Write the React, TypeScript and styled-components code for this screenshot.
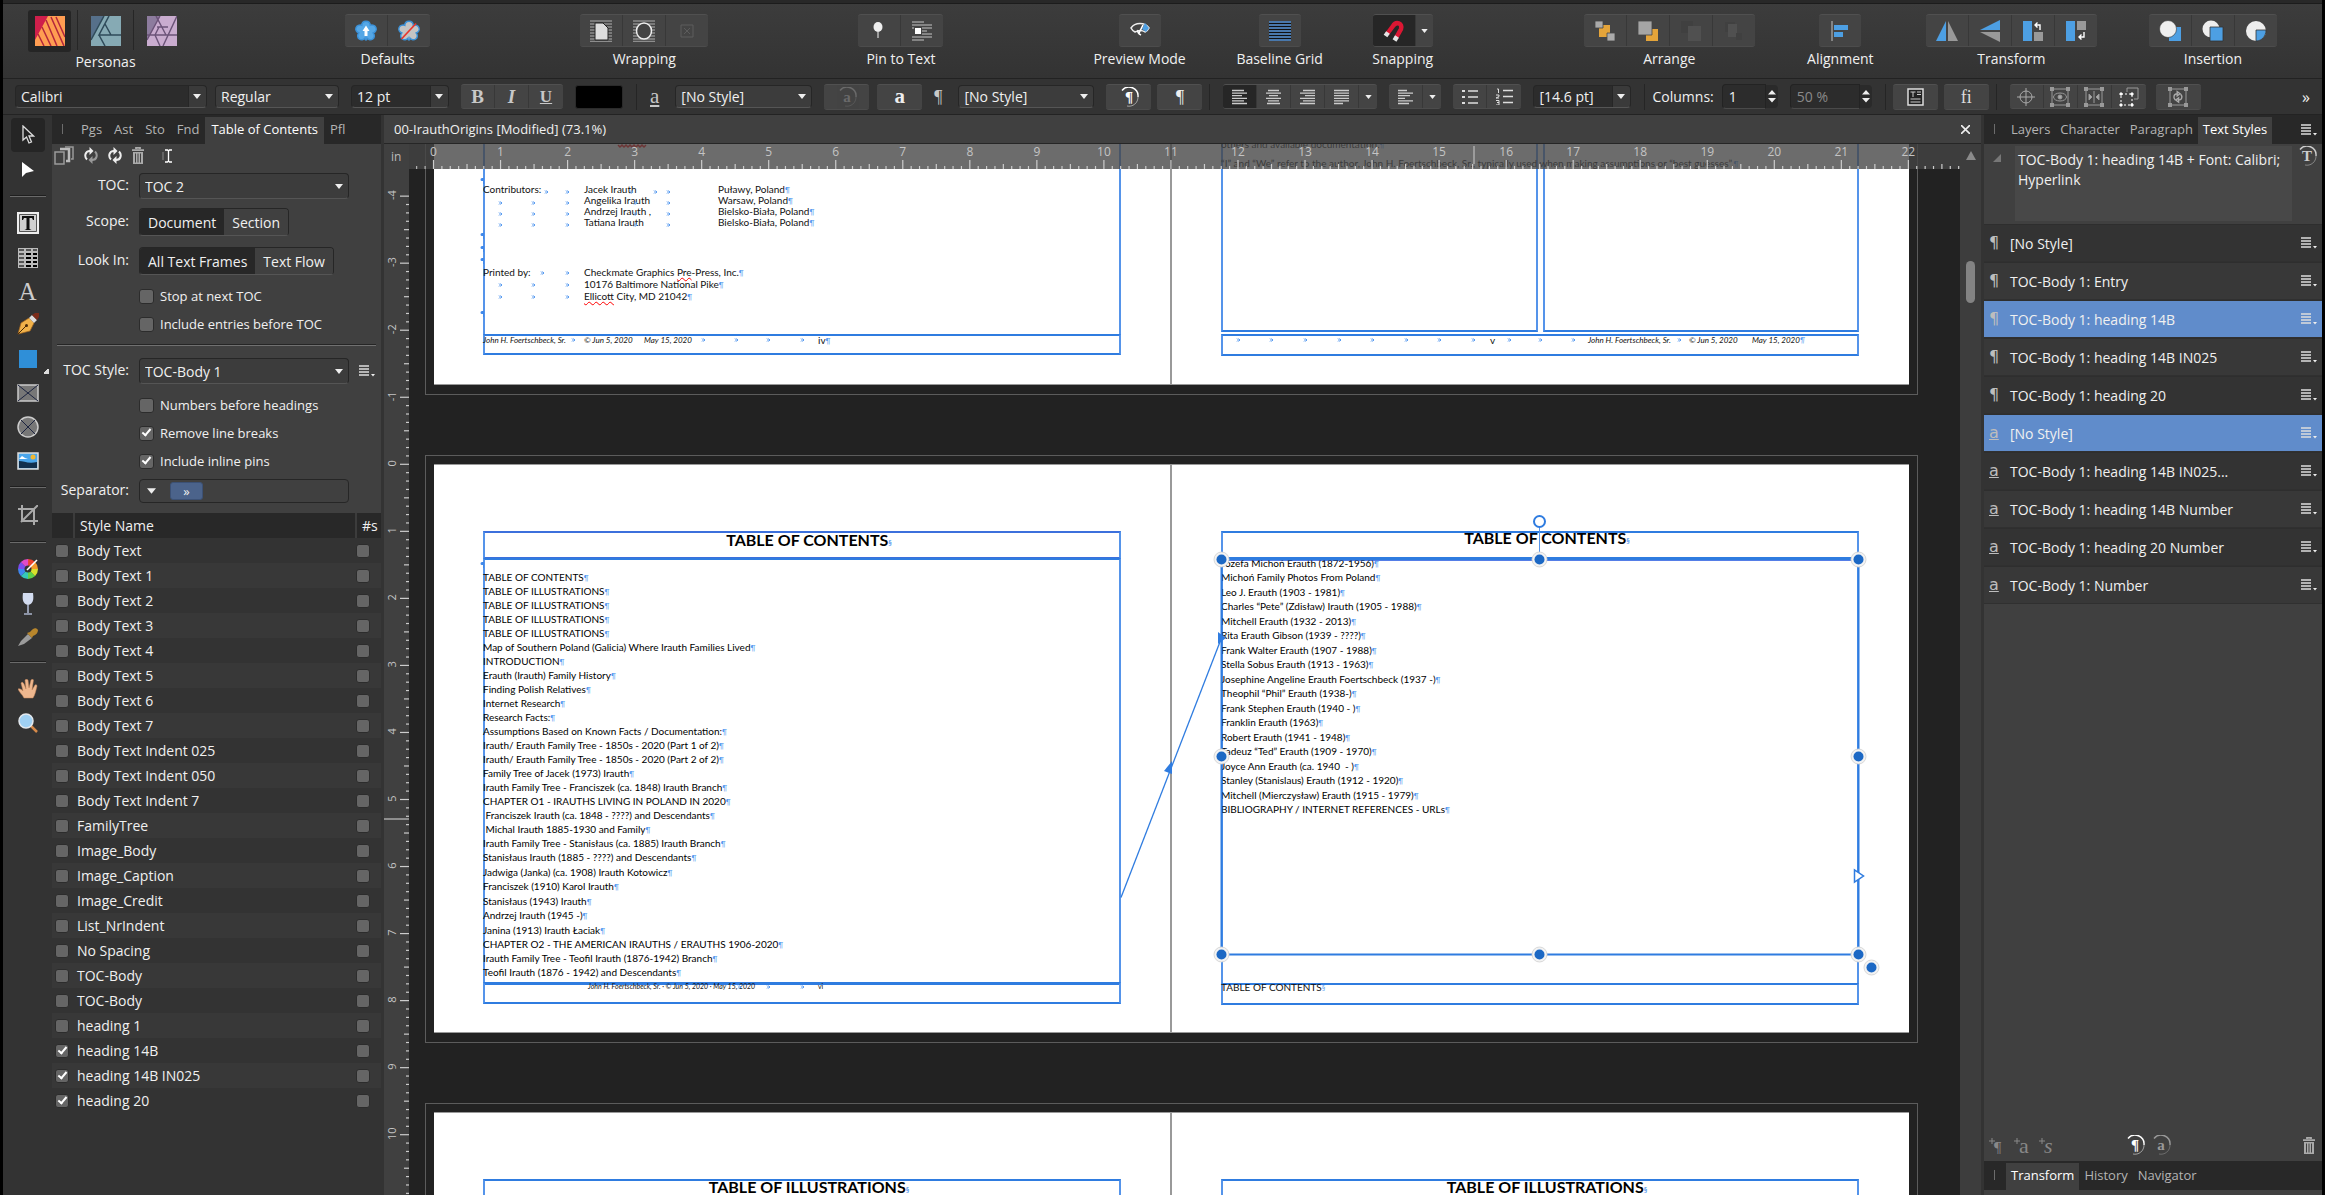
import React from "react";
import styled, { createGlobalStyle, css } from "styled-components";

const UI = `"Open Sans", "Noto Sans", sans-serif`;
const DOC = `Lato, "Open Sans", sans-serif`;
const SERIF = `"Liberation Serif", "DejaVu Serif", serif`;
const BLUE = "#2f7ce0";

const Global = createGlobalStyle`
  *, *::before, *::after { box-sizing: border-box; }
  body { margin: 0; background: #000; font-family: ${UI}; font-size: 14px; color: #f0f0f0; overflow: hidden; }
  button, select, input { font-family: inherit; color: inherit; margin: 0; }
  svg { display: block; flex: none; }
`;

/* ---------- shell ---------- */

const Shell = styled.div`
  display: flex;
  flex-direction: column;
  height: 100vh;
  padding: 0 3px;
  background: #000;
`;
const TitleStrip = styled.div`
  height: 4px;
  flex: none;
  background: #282828;
  border-bottom: 1px solid #1c1c1c;
`;
const Toolbar = styled.header`
  display: flex;
  height: 75px;
  flex: none;
  padding: 6px 0 0 25px;
  background: linear-gradient(#3c3c3c, #333);
  border-bottom: 1px solid #222;
`;
const Spacer = styled.div<{ $grow: number }>`
  flex: ${(p) => p.$grow} 1 0;
`;
const Group = styled.section<{ $w: number; $persona?: boolean }>`
  display: flex;
  flex-direction: column;
  align-items: center;
  flex: none;
  width: ${(p) => p.$w}px;
  padding-top: ${(p) => (p.$persona ? 0 : 4)}px;
  gap: ${(p) => (p.$persona ? 0 : 2)}px;
`;
const GroupLabel = styled.span`
  font-size: 14px;
  line-height: 20px;
  white-space: nowrap;
`;
const Segments = styled.div<{ $h: number }>`
  display: flex;
  height: ${(p) => p.$h}px;
  border-radius: 3px;
  overflow: hidden;
  background: #444;
  border-top: 1px solid #505050;
  border-bottom: 1px solid #4c4c4c;
`;
const Seg = styled.button<{ $w: number; $on?: boolean; $dim?: boolean }>`
  display: flex;
  align-items: center;
  justify-content: center;
  width: ${(p) => p.$w}px;
  padding: 0;
  border: 0;
  border-right: 1px solid #383838;
  background: ${(p) => (p.$on ? "#262626" : "transparent")};
  color: #d0d0d0;
  opacity: ${(p) => (p.$dim ? 0.45 : 1)};
  &:last-child { border-right: 0; }
`;
const Personas = styled.div`
  display: flex;
  gap: 6px;
  height: 42px;
`;
const Persona = styled.button<{ $on?: boolean }>`
  display: flex;
  align-items: center;
  justify-content: center;
  width: 43px;
  padding: 0;
  border: 0;
  border-radius: 3px;
  background: ${(p) => (p.$on ? "#252525" : "transparent")};
`;
const PersonaRule = styled.span`
  width: 1px;
  height: 40px;
  background: #262626;
`;

/* ---------- context bar ---------- */

const Context = styled.div`
  display: flex;
  align-items: center;
  gap: 12px;
  height: 36px;
  flex: none;
  padding: 0 12px;
  background: #333;
  border-bottom: 1px solid #232323;
`;
const Cluster = styled.div<{ $gap?: number }>`
  display: flex;
  align-items: center;
  gap: ${(p) => p.$gap ?? 8}px;
`;
const Bar = styled.span`
  width: 1px;
  height: 26px;
  margin: 0 1px;
  background: #252525;
`;
const Glyph = styled.span<{ $size: number; $color?: string; $u?: boolean; $i?: boolean; $b?: boolean }>`
  font-family: ${SERIF};
  font-size: ${(p) => p.$size}px;
  line-height: 1;
  color: ${(p) => p.$color ?? "#c8c8c8"};
  text-decoration: ${(p) => (p.$u ? "underline" : "none")};
  font-style: ${(p) => (p.$i ? "italic" : "normal")};
  font-weight: ${(p) => (p.$b ? 700 : 400)};
`;
const SelectWrap = styled.span<{ $w: number; $h: number; $split?: boolean }>`
  position: relative;
  display: inline-flex;
  width: ${(p) => p.$w}px;
  height: ${(p) => p.$h}px;
  border: 1px solid #262626;
  border-bottom-color: #555;
  border-radius: 4px;
  background: ${(p) => (p.$split ? "linear-gradient(to right, #2c2c2c calc(100% - 18px), #262626 calc(100% - 18px), #262626 calc(100% - 17px), #3a3a3a 0)" : "#3c3c3c")};
  select {
    width: 100%;
    padding: 0 20px 0 5px;
    border: 0;
    appearance: none;
    background: transparent;
    font-size: 14px;
  }
  option { color: #222; }
`;
const CaretBox = styled.span`
  position: absolute;
  right: 5px;
  top: 0;
  bottom: 0;
  display: flex;
  align-items: center;
  pointer-events: none;
`;
const Swatch = styled.button`
  width: 48px;
  height: 24px;
  padding: 0;
  border: 1px solid #2a2a2a;
  border-radius: 3px;
  background: #000;
`;
const SpinWrap = styled.label<{ $dim?: boolean }>`
  display: flex;
  align-items: center;
  gap: 8px;
  font-size: 14px;
  white-space: nowrap;
  color: ${(p) => (p.$dim ? "#8a8a8a" : "#f0f0f0")};
`;
const SpinField = styled.input<{ $w: number }>`
  width: ${(p) => p.$w}px;
  height: 25px;
  padding: 0 6px;
  border: 1px solid #232323;
  border-bottom-color: #4a4a4a;
  border-radius: 4px 0 0 4px;
  background: #2c2c2c;
  font-size: 14px;
`;
const SpinKnob = styled.span`
  display: flex;
  align-items: center;
  justify-content: center;
  width: 12px;
  height: 23px;
  background: #2a2a2a;
  border-radius: 0 4px 4px 0;
`;
const Push = styled.button`
  margin-left: auto;
  padding: 0;
  border: 0;
  background: transparent;
  font-size: 16px;
`;

/* ---------- main columns ---------- */

const Main = styled.main`
  display: flex;
  flex: 1;
  min-height: 0;
  background: #333;
`;
const ToolStrip = styled.nav`
  display: flex;
  flex-direction: column;
  align-items: center;
  width: 49px;
  flex: none;
  padding-top: 3px;
  background: #333;
`;
const Tool = styled.button<{ $h: number; $on?: boolean }>`
  position: relative;
  display: flex;
  align-items: center;
  justify-content: center;
  width: 34px;
  height: ${(p) => p.$h}px;
  flex: none;
  padding: 0;
  border: 0;
  border-radius: 4px;
  background: ${(p) => (p.$on ? "#252525" : "transparent")};
`;
const Flyout = styled.span`
  position: absolute;
  right: -4px;
  bottom: 3px;
  width: 6px;
  height: 6px;
  background: linear-gradient(135deg, transparent 50%, #ddd 50%);
`;
const ToolRule = styled.hr`
  width: 36px;
  height: 2px;
  flex: none;
  margin: 8px 0;
  border: 0;
  background: #1f1f1f;
  border-bottom: 1px solid #6a6a6a;
`;
const Panel = styled.aside<{ $w: number }>`
  display: flex;
  flex-direction: column;
  width: ${(p) => p.$w}px;
  flex: none;
  background: #404040;
`;
const Tabs = styled.div`
  display: flex;
  align-items: flex-end;
  height: 29px;
  flex: none;
  padding-left: 10px;
  background: #282828;
`;
const Grip = styled.span<{ $gap: number }>`
  width: 1px;
  height: 10px;
  margin: 0 ${(p) => p.$gap}px 10px 0;
  background: #6c6c6c;
`;
const Tab = styled.button<{ $on?: boolean; $tight?: boolean }>`
  height: 27px;
  padding: 0 ${(p) => (p.$tight ? 5 : 6)}px 4px;
  border: 0;
  background: ${(p) => (p.$on ? "#404040" : "transparent")};
  color: ${(p) => (p.$on ? "#fff" : "#b4b4b4")};
  font-size: 13px;
  white-space: nowrap;
`;
const TabEnd = styled.span`
  margin: 0 5px 8px auto;
`;
const Gutter = styled.div`
  width: 3px;
  flex: none;
  background: #333;
`;
const PanelIcons = styled.div`
  display: flex;
  align-items: center;
  gap: 10px;
  height: 23px;
  flex: none;
  padding-left: 2px;
`;
const IconButton = styled.button`
  display: flex;
  padding: 0;
  border: 0;
  background: transparent;
`;
const Form = styled.div`
  display: flex;
  flex-direction: column;
  padding: 6px 5px 10px 0;
`;
const Field = styled.div<{ $mt?: number }>`
  display: grid;
  grid-template-columns: 77px 210px auto;
  column-gap: 10px;
  align-items: center;
  margin-top: ${(p) => p.$mt ?? 0}px;
`;
const FieldLabel = styled.label`
  text-align: right;
  font-size: 14px;
  line-height: 20px;
  padding-bottom: 2px;
  white-space: nowrap;
`;
const Toggle = styled.div`
  display: inline-flex;
  justify-self: start;
  height: 28px;
  border: 1px solid #262626;
  border-bottom-color: #555;
  border-radius: 4px;
  overflow: hidden;
`;
const ToggleButton = styled.button<{ $on?: boolean }>`
  padding: 0 8px;
  border: 0;
  background: ${(p) => (p.$on ? "#272727" : "#404040")};
  font-size: 14px;
  white-space: nowrap;
`;
const Checks = styled.div<{ $mt: number }>`
  margin: ${(p) => p.$mt}px 0 0 87px;
`;
const CheckLine = styled.label`
  display: flex;
  align-items: center;
  gap: 6px;
  height: 28px;
  font-size: 13px;
`;
const Check = styled.input<{ $s: number }>`
  position: relative;
  display: block;
  width: ${(p) => p.$s}px;
  height: ${(p) => p.$s}px;
  flex: none;
  appearance: none;
  border: 1px solid #2c2c2c;
  border-radius: 3px;
  background: #656565;
  &:checked::after {
    content: "";
    position: absolute;
    left: 4px;
    top: 0;
    width: 5px;
    height: 9px;
    border: solid #fff;
    border-width: 0 2px 2px 0;
    transform: rotate(40deg);
  }
`;
const Rule = styled.hr`
  width: 319px;
  height: 2px;
  margin: 6px 0 12px 5px;
  border: 0;
  background: #252525;
  border-bottom: 1px solid #707070;
`;
const SeparatorBox = styled.div`
  display: flex;
  align-items: center;
  gap: 14px;
  height: 24px;
  padding-left: 7px;
  border: 1px solid #262626;
  border-radius: 4px;
`;
const Chip = styled.button`
  width: 33px;
  height: 18px;
  padding: 0;
  border: 1px solid #3c5175;
  border-radius: 3px;
  background: #4b638b;
  font-size: 13px;
  line-height: 14px;
`;
const StyleTable = styled.table`
  width: 100%;
  border-collapse: collapse;
  background: #333;
  th {
    height: 25px;
    padding: 0 0 0 5px;
    background: #282828;
    text-align: left;
    font-weight: 400;
    font-size: 14px;
    border-left: 2px solid #3c3c3c;
  }
  th:first-child { border-left: 0; width: 22px; }
  th:last-child { width: 25px; }
  td { height: 25px; padding: 0 0 0 3px; font-size: 14px; white-space: nowrap; line-height: 20px; }
  td:last-child { padding-left: 0; }
  tbody tr:nth-child(even) { background: #383838; }
`;
const TableFill = styled.div`
  flex: 1;
  background: #333;
`;

/* ---------- document ---------- */

const Doc = styled.section`
  display: flex;
  flex-direction: column;
  flex: 1;
  min-width: 0;
`;
const DocTab = styled.div`
  display: flex;
  align-items: center;
  justify-content: space-between;
  height: 29px;
  flex: none;
  padding: 0 11px 0 10px;
  background: #404040;
  border-bottom: 1px solid #262626;
  font-size: 13px;
`;
const DocBody = styled.div`
  display: flex;
  flex: 1;
  min-height: 0;
`;
const Canvas = styled.div`
  position: relative;
  flex: 1;
  min-width: 0;
  overflow: hidden;
  padding-left: 41px;
  background: #222;
`;
const RulerX = styled.div`
  position: absolute;
  left: 25px;
  right: 0;
  top: 0;
  height: 25px;
  overflow: hidden;
  background: rgba(68, 68, 68, 0.79);
`;
const RulerY = styled.div`
  position: absolute;
  left: 0;
  top: 0;
  bottom: 0;
  width: 25px;
  overflow: hidden;
  background: #404040;
`;
const Scroll = styled.div`
  display: flex;
  flex-direction: column;
  align-items: center;
  width: 21px;
  flex: none;
  padding-top: 7px;
  background: #3d3d3d;
`;
const Thumb = styled.div`
  width: 9px;
  height: 42px;
  margin-top: 101px;
  border-radius: 5px;
  background: #838383;
`;
const Spreads = styled.div`
  display: flex;
  flex-direction: column;
  gap: 60px;
  margin-top: -337px;
`;
const Spread = styled.article`
  position: relative;
  display: flex;
  width: 1493px;
  height: 588px;
  flex: none;
  padding: 8px;
  border: 1px solid #5c5c5c;
`;
const Sheet = styled.div`
  position: relative;
  width: 736px;
  height: 569px;
  background: #fff;
  color: #111;
  font-family: ${DOC};
  border-bottom: 1px solid #999;
  border-top: 1px solid #999;
  & + & { width: 739px; border-left: 2px solid #999; }
`;
const Frame = styled.div<{ $y: number; $h: number; $x?: number; $w?: number; $c?: string }>`
  position: absolute;
  left: ${(p) => p.$x ?? 49}px;
  top: ${(p) => p.$y}px;
  width: ${(p) => p.$w ?? 638}px;
  height: ${(p) => p.$h}px;
  border: 2px solid ${(p) => p.$c ?? BLUE};
  border-left-color: #5594ea;
  border-right-color: #5594ea;
`;
const text = css<{ $y: number; $x?: number }>`
  position: absolute;
  top: ${(p) => p.$y}px;
  left: ${(p) => p.$x ?? 49}px;
  margin: 0;
  white-space: nowrap;
`;
const Heading = styled.h2<{ $y: number }>`
  ${text}
  width: 652px;
  text-align: center;
  font-size: 16px;
  line-height: 20px;
  font-weight: 700;
  color: #000;
`;
const List = styled.ol<{ $y: number; $alt?: boolean }>`
  ${text}
  padding: 0;
  list-style: none;
  font-size: 10px;
  line-height: 14px;
  color: #000;
  li { white-space: pre; }
  ${(p) => p.$alt && css`li:nth-child(even) { padding-bottom: 1px; }`}
  ${(p) => !p.$alt && css`li:nth-child(21), li:nth-child(23), li:nth-child(25) { padding-bottom: 1px; }`}
`;
const Columns = styled.div<{ $y: number; $lh: number }>`
  ${text}
  display: grid;
  grid-template-columns: 101px 134px 200px;
  font-size: 10px;
  line-height: ${(p) => p.$lh}px;
`;
const Footer = styled.p<{ $y: number; $size?: number; $plain?: boolean }>`
  ${text}
  font-size: ${(p) => p.$size ?? 8}px;
  line-height: 12px;
  font-style: ${(p) => (p.$plain ? "normal" : "italic")};
`;
const Mark = styled.span`
  font-size: 7px;
  color: #5a9cf0;
  line-height: 1;
`;
const Squiggle = styled.span`
  text-decoration: underline wavy #f00 1px;
  text-underline-offset: 1px;
`;
const Overlay = styled.svg<{ $inset?: number }>`
  position: absolute;
  left: ${(p) => p.$inset ?? 0}px;
  top: ${(p) => p.$inset ?? 0}px;
  overflow: visible;
`;

/* ---------- right panel ---------- */

const Summary = styled.div`
  display: flex;
  align-items: flex-start;
  height: 80px;
  flex: none;
  padding: 2px 5px 0 9px;
`;
const SummaryText = styled.p`
  width: 277px;
  height: 75px;
  margin: 0 5px 0 14px;
  padding: 4px 0 0 3px;
  background: #484848;
  font-size: 14px;
  line-height: 20px;
  white-space: nowrap;
`;
const StyleList = styled.ul`
  margin: 0;
  padding: 0;
  list-style: none;
`;
const StyleRow = styled.li<{ $on?: boolean }>`
  display: flex;
  align-items: center;
  height: 38px;
  padding: 0 5px 0 0;
  background: #333;
  border-top: 1px solid #2e2e2e;
  border-bottom: 1px solid #303030;
  font-size: 14px;
  &:nth-child(even) { background: #383838; }
  && { ${(p) => p.$on && "background: #608ccb;"} }
  > span:nth-child(2) { flex: 1; }
`;
const RowGlyph = styled.span`
  width: 26px;
  padding-left: 5px;
  color: #bdbdbd;
  font-family: "DejaVu Sans", sans-serif;
  font-size: 16px;
  line-height: 20px;
`;
const StyleActions = styled.div`
  display: flex;
  align-items: center;
  height: 32px;
  margin-top: auto;
  padding: 0 7px 0 5px;
`;
const ActionSet = styled.div<{ $ml: number; $gap: number }>`
  display: flex;
  gap: ${(p) => p.$gap}px;
  margin-left: ${(p) => p.$ml}px;
`;
const PanelTail = styled.div`
  height: 5px;
  flex: none;
`;

/* ---------- small drawings ---------- */

const Caret = ({ w = 8, c = "#eee" }: { w?: number; c?: string }) => (
  <svg width={w} height={w - 3} viewBox="0 0 8 5"><path d="M0 0h8L4 5z" fill={c} /></svg>
);
const MenuIcon = () => (
  <svg width="16" height="12" viewBox="0 0 16 12">
    <path d="M0 1h10M0 4h10M0 7h10M0 10h10" stroke="#ddd" strokeWidth="1.6" />
    <path d="M12 9h4l-2 2.5z" fill="#eee" />
  </svg>
);
const Select = ({ w, h = 23, value, split, label, id }: { w: number; h?: number; value: string; split?: boolean; label?: string; id?: string }) => (
  <SelectWrap $w={w} $h={h} $split={split}>
    <select aria-label={label} id={id} defaultValue={value}><option>{value}</option></select>
    <CaretBox><Caret /></CaretBox>
  </SelectWrap>
);
const Lines = ({ xs }: { xs: [number, number][] }) => (
  <svg width="17" height="16" viewBox="0 0 17 16">
    {xs.map(([a, b], i) => <path key={i} d={`M${a} ${1.5 + i * 2.6}H${b}`} stroke="#ccc" strokeWidth="1.3" />)}
  </svg>
);
const Trash = () => (
  <svg width="12" height="17" viewBox="0 0 12 17">
    <path d="M4 2V.8h4V2M0 3.2h12" stroke="#aaa" strokeWidth="1.8" fill="none" />
    <path d="M1 5h10v12H1z" fill="#aaa" />
    <path d="M3.5 6.5v9M6 6.5v9M8.5 6.5v9" stroke="#404040" strokeWidth="1" />
  </svg>
);
const Refresh = ({ c = "#eee", d = "#999" }: { c?: string; d?: string }) => (
  <svg width="14" height="17" viewBox="0 0 14 17" fill="none">
    <path d="M3 12.500C0 9.500 1 4 6 4" stroke={c} strokeWidth="2" /><path d="M5.500 0v8L9.500 4z" fill={c} />
    <path d="M11 4.500c3 3 2 8.500-3 8.500" stroke={d} strokeWidth="2" /><path d="M8.500 17V9l-4 4z" fill={d} />
  </svg>
);
const Ringed = ({ ch, c }: { ch: string; c: string }) => (
  <svg width="20" height="20" viewBox="0 0 20 20">
    <path d="M3 3.500A9 9 0 0 1 19 10" fill="none" stroke={c} strokeWidth="1.400" />
    <path d="M19 10A9 9 0 0 1 8 19" fill="none" stroke={c} strokeWidth="1" opacity=".5" />
    <text x="10" y="15" textAnchor="middle" fontFamily="Liberation Serif, serif" fontWeight="700" fontSize="15" fill={c}>{ch}</text>
  </svg>
);
const Gear = ({ off }: { off?: boolean }) => (
  <svg width="24" height="24" viewBox="0 0 24 24">
    <path d="M12 1.200c2.600 0 4.200 1.900 4.200 4.200 2.400-1 5 .2 5.800 2.400s-.6 4.400-2.800 5.200c1.700 1.700 1.500 4.600-.4 6-1.900 1.400-4.600.9-5.800-.8-.2 2.600-1.800 2.600-2 0-1.200 1.700-3.900 2.200-5.800.8s-2.100-4.300-.4-6C2.600 12.200 1.200 10 2 7.800s3.400-3.400 5.800-2.400C7.800 3.100 9.400 1.200 12 1.200z" transform="translate(0 1)" fill={off ? "#c4c4c4" : "#55a7e6"} stroke="#3b91d8" strokeWidth="1.400" />
    {off ? <path d="M4.500 20 19 4.500" stroke="#e8352c" strokeWidth="1.700" /> : <path d="M12 6.500 15.500 12h-2v5h-3v-5h-2z" fill="#fff" />}
  </svg>
);
const Stripes = ({ c = "#8d8d8d", children, w = 22 }: { c?: string; children?: React.ReactNode; w?: number }) => (
  <svg width={w} height="22" viewBox="0 0 22 22">
    {[1, 4, 7, 10, 13, 16, 19, 21.500].map((y) => <path key={y} d={`M0 ${y}h22`} stroke={c} strokeWidth="1.300" />)}
    {children}
  </svg>
);
const Svg = ({ s = 22, children }: { s?: number; children: React.ReactNode }) => (
  <svg width={s} height={s} viewBox={`0 0 ${s} ${s}`}>{children}</svg>
);
const Corners = ({ children }: { children: React.ReactNode }) => (
  <svg width="20" height="20" viewBox="0 0 20 20" fill="none" stroke="#999">
    <path d="M2 2h16v16H2z" />
    <path d="M0 0h4v4H0zM16 0h4v4h-4zM0 16h4v4H0zM16 16h4v4h-4z" fill="#999" stroke="none" />
    {children}
  </svg>
);

/* ---------- toolbar ---------- */

const Top = () => (
  <Toolbar>
    <Group $w={155} $persona>
      <Personas>
        <Persona $on aria-label="Publisher">
          <Svg s={30}><path d="M0 0h30v30H0z" fill="#ff9d52" /><path d="M0 0h13L0 24z" fill="#cf1f4b" /><path d="M11 4 22 30M7 11l9 19M3 18l6 12M16 1l13 29M21 1l9 20" stroke="#b3263c" strokeWidth="1.500" /></Svg>
        </Persona>
        <PersonaRule />
        <Persona aria-label="Designer">
          <Svg s={30}><path d="M0 0h30v30H0z" fill="#86aab4" /><path d="M0 0h13L0 24z" fill="#56708a" /><path d="M13 0 0 24M18 0 8 19h22M8 19l6 11M14 8l6 11" stroke="#2f4b5a" strokeWidth="1.500" fill="none" /></Svg>
        </Persona>
        <PersonaRule />
        <Persona aria-label="Photo">
          <Svg s={30}><path d="M0 0h30v30H0z" fill="#c9accf" /><path d="M0 0h13L0 24z" fill="#8d7c9e" /><path d="M13 0 0 24M9 0l10 19M30 0 16 30M10 11h11M0 19h30M12 11 8 19l5 11" stroke="#6b5378" strokeWidth="1.400" fill="none" /></Svg>
        </Persona>
      </Personas>
      <GroupLabel>Personas</GroupLabel>
    </Group>
    <Spacer $grow={162} />
    <Group $w={85}>
      <Segments $h={33}><Seg $w={43} aria-label="Synchronise"><Gear /></Seg><Seg $w={42} aria-label="Revert"><Gear off /></Seg></Segments>
      <GroupLabel>Defaults</GroupLabel>
    </Group>
    <Spacer $grow={150} />
    <Group $w={128}>
      <Segments $h={33}>
        <Seg $w={43} aria-label="Wrap settings"><Stripes><path d="M5 3h8l5 5v12H5z" fill="#ddd" stroke="#222" /></Stripes></Seg>
        <Seg $w={43} aria-label="Wrap outline"><Stripes><ellipse cx="11" cy="11" rx="7.500" ry="8" fill="#444" stroke="#eee" strokeWidth="1.500" /></Stripes></Seg>
        <Seg $w={42} aria-label="No wrap"><Svg><path d="M5 5h12v12H5zM8 8l6 6M14 8l-6 6" fill="none" stroke="#5c5c5c" /></Svg></Seg>
      </Segments>
      <GroupLabel>Wrapping</GroupLabel>
    </Group>
    <Spacer $grow={150} />
    <Group $w={85}>
      <Segments $h={33}>
        <Seg $w={43} aria-label="Float pin"><Svg><ellipse cx="10" cy="7" rx="4.500" ry="5" fill="#eee" /><path d="M10 12v6" stroke="#bbb" strokeWidth="1.500" /></Svg></Seg>
        <Seg $w={42} aria-label="Inline pin"><Svg><path d="M1 2h12M1 5h20M1 8h2M11 8h10M11 11h5M11 14h10M1 17h20M1 20h12" stroke="#999" strokeWidth="1.300" /><path d="M4 8h6v6H4z" fill="#fff" /></Svg></Seg>
      </Segments>
      <GroupLabel>Pin to Text</GroupLabel>
    </Group>
    <Spacer $grow={149} />
    <Group $w={94}>
      <Segments $h={33}><Seg $w={42} aria-label="Preview"><Svg><path d="M2 8c4-6 14-6 18 0-1 2-2 3-4 4-3-2-6-2-10 0C4 11 3 10 2 8z" fill="none" stroke="#eee" strokeWidth="1.500" /><path d="M13 9l3-6 4 5-3 4z" fill="#4d9fe3" /><path d="M14 5 10 13M9 10c-1 3 1 4 3 5" stroke="#fff" strokeWidth="1.600" fill="none" /></Svg></Seg></Segments>
      <GroupLabel>Preview Mode</GroupLabel>
    </Group>
    <Spacer $grow={50} />
    <Group $w={86}>
      <Segments $h={33}><Seg $w={42} aria-label="Grid"><Svg><path d="M0 1h22v20H0z" fill="#111" /><path d="M0 2h22M0 5h22M0 8h22M0 11h22M0 14h22M0 17h22M0 20h22" stroke="#5c9be0" strokeWidth="1.600" /></Svg></Seg></Segments>
      <GroupLabel>Baseline Grid</GroupLabel>
    </Group>
    <Spacer $grow={49} />
    <Group $w={62}>
      <Segments $h={33}>
        <Seg $w={43} $on aria-label="Snap"><Svg s={24}><path d="M5 15 11 7C14 2 21 4 19 10l-5 9" fill="none" stroke="#dc1733" strokeWidth="4.500" /><path d="M3.500 17 6 13.500M12.500 21.500 15 17.500" stroke="#e3e3e3" strokeWidth="4.500" /></Svg></Seg>
        <Seg $w={17} aria-label="Snap options"><Caret w={7} /></Seg>
      </Segments>
      <GroupLabel>Snapping</GroupLabel>
    </Group>
    <Spacer $grow={150} />
    <Group $w={171}>
      <Segments $h={33}>
        <Seg $w={43} aria-label="To front"><Svg><path d="M5 5h11v12H5z" fill="#e4a43a" /><path d="M1 1h8v7H1zM13 13h8v8h-8z" fill="#aaa" stroke="#444" strokeWidth=".8" /></Svg></Seg>
        <Seg $w={43} aria-label="Forward"><Svg><path d="M9 9h12v12H9z" fill="#e4a43a" /><path d="M1 1h14v14H1z" fill="#a5a5a5" stroke="#444" strokeWidth=".8" /></Svg></Seg>
        <Seg $w={43} aria-label="Backward"><Svg><path d="M1 1h12v12H1z" fill="#404040" /><path d="M8 6h13v15H8z" fill="#505050" /></Svg></Seg>
        <Seg $w={42} aria-label="To back"><Svg><path d="M2 2h10v10H2z" fill="#404040" /><path d="M5 4h9v13H5z" fill="#505050" /><path d="M13 13h6v7h-6z" fill="#404040" /></Svg></Seg>
      </Segments>
      <GroupLabel>Arrange</GroupLabel>
    </Group>
    <Spacer $grow={51} />
    <Group $w={69}>
      <Segments $h={33}><Seg $w={42} aria-label="Align"><Svg><path d="M3 1v20" stroke="#999" strokeWidth="1.500" /><path d="M5 5h14v5H5zM5 12h9v5H5z" fill="#4d9fe3" /></Svg></Seg></Segments>
      <GroupLabel>Alignment</GroupLabel>
    </Group>
    <Spacer $grow={51} />
    <Group $w={171}>
      <Segments $h={33}>
        <Seg $w={43} aria-label="Flip horizontal"><Svg><path d="M10 1v20H0z" fill="#4d9fe3" /><path d="M12 1v20h10z" fill="#999" /></Svg></Seg>
        <Seg $w={43} aria-label="Flip vertical"><Svg><path d="M21 0v10H1z" fill="#4d9fe3" /><path d="M21 12v10L1 12z" fill="#999" /></Svg></Seg>
        <Seg $w={43} aria-label="Rotate left"><Svg><path d="M1 1h9v20H1z" fill="#4d9fe3" /><path d="M12 12h9v9h-9z" fill="#999" /><path d="M18 10V5h-5M15.500 2.500 13 5l2.500 2.500" fill="none" stroke="#fff" strokeWidth="1.400" /></Svg></Seg>
        <Seg $w={42} aria-label="Rotate right"><Svg><path d="M1 1h9v20H1z" fill="#4d9fe3" /><path d="M12 1h9v9h-9z" fill="#999" /><path d="M19 12v5h-5M16.500 14.500 14 17l2.500 2.500" fill="none" stroke="#fff" strokeWidth="1.400" /></Svg></Seg>
      </Segments>
      <GroupLabel>Transform</GroupLabel>
    </Group>
    <Spacer $grow={52} />
    <Group $w={128}>
      <Segments $h={33}>
        <Seg $w={43} aria-label="Insert behind"><Svg><path d="M10 7h12v14H10z" fill="#4d9fe3" /><ellipse cx="9" cy="9" rx="8.500" ry="8.500" fill="#eee" stroke="#333" strokeWidth=".6" /></Svg></Seg>
        <Seg $w={43} aria-label="Insert on top"><Svg><circle cx="9" cy="9" r="8.500" fill="#eee" /><path d="M8 7h13v14H8z" fill="#4d9fe3" stroke="#333" strokeWidth=".8" /></Svg></Seg>
        <Seg $w={42} aria-label="Insert inside"><Svg><circle cx="11" cy="11" r="10" fill="#eee" /><path d="M11 10h10c0 6-4 11-10 11z" fill="#4d9fe3" stroke="#333" strokeWidth=".8" /></Svg></Seg>
      </Segments>
      <GroupLabel>Insertion</GroupLabel>
    </Group>
    <Spacer $grow={45} />
  </Toolbar>
);

const Solo = ({ children, label, dim }: { children: React.ReactNode; label: string; dim?: boolean }) => (
  <Segments $h={26}><Seg $w={45} $dim={dim} aria-label={label}>{children}</Seg></Segments>
);
const Spinner = () => (
  <SpinKnob><svg width="8" height="13" viewBox="0 0 8 13"><path d="M0 4.500h8L4 0zM0 8h8l-4 4.500z" fill="#eee" /></svg></SpinKnob>
);

const ContextBar = () => (
  <Context>
    <Cluster>
      <Select w={192} value="Calibri" split label="Font family" />
      <Select w={124} value="Regular" label="Font style" />
    </Cluster>
    <Select w={98} value="12 pt" split label="Font size" />
    <Segments $h={25}>
      <Seg $w={34} aria-label="Bold"><Glyph $size={19} $b>B</Glyph></Seg>
      <Seg $w={34} aria-label="Italic"><Glyph $size={19} $i $b>I</Glyph></Seg>
      <Seg $w={34} aria-label="Underline"><Glyph $size={17} $u $b>U</Glyph></Seg>
    </Segments>
    <Swatch aria-label="Text fill" />
    <Bar />
    <Cluster $gap={16}>
      <Glyph $size={21} $u>a</Glyph>
      <Select w={137} value="[No Style]" label="Character style" />
    </Cluster>
    <Cluster>
      <Solo label="Ringed character" dim><Ringed ch="a" c="#999" /></Solo>
      <Solo label="Character panel"><Glyph $size={21} $color="#eee" $b>a</Glyph></Solo>
    </Cluster>
    <Cluster $gap={16}>
      <Glyph $size={18}>¶</Glyph>
      <Select w={136} value="[No Style]" label="Paragraph style" />
    </Cluster>
    <Cluster $gap={6}>
      <Solo label="Ringed paragraph"><Ringed ch="¶" c="#fff" /></Solo>
      <Solo label="Paragraph panel"><Glyph $size={18} $color="#eee">¶</Glyph></Solo>
      <Bar />
    </Cluster>
    <Segments $h={25}>
      <Seg $w={34} $on aria-label="Align left"><Lines xs={[[1, 13], [1, 16], [1, 11], [1, 16], [1, 13], [1, 16]]} /></Seg>
      <Seg $w={34} aria-label="Align centre"><Lines xs={[[3, 14], [1, 16], [4, 13], [1, 16], [3, 14], [2, 15]]} /></Seg>
      <Seg $w={34} aria-label="Align right"><Lines xs={[[4, 16], [1, 16], [6, 16], [1, 16], [4, 16], [1, 16]]} /></Seg>
      <Seg $w={34} aria-label="Justify"><Lines xs={[[1, 16], [1, 16], [1, 16], [1, 16], [1, 16], [1, 10]]} /></Seg>
      <Seg $w={18} aria-label="Justify options"><Caret w={7} /></Seg>
    </Segments>
    <Segments $h={25}>
      <Seg $w={34} aria-label="Vertical align"><Lines xs={[[1, 10], [1, 16], [1, 13], [1, 8], [1, 16], [1, 12]]} /></Seg>
      <Seg $w={18} aria-label="Vertical options"><Caret w={7} /></Seg>
    </Segments>
    <Segments $h={25}>
      <Seg $w={34} aria-label="Bullets"><svg width="16" height="16" viewBox="0 0 16 16"><path d="M6 2h10M6 8h10M6 14h10" stroke="#ddd" strokeWidth="1.400" /><path d="M0 1h3v2H0zM0 7h3v2H0zM0 13h3v2H0z" fill="#ddd" /></svg></Seg>
      <Seg $w={34} aria-label="Numbering"><svg width="17" height="17" viewBox="0 0 17 17"><path d="M7 2.500h10M7 8.500h10M7 14.500h10" stroke="#ddd" strokeWidth="1.400" /><path d="M1 1h1.500v4M0 7h3v1.500L0 10h3M0 12.500h3V17H0M1 14.500h2" stroke="#ddd" fill="none" /></svg></Seg>
    </Segments>
    <Select w={98} value="[14.6 pt]" split label="Leading" />
    <Cluster $gap={6}>
      <Bar />
      <SpinWrap>Columns:<Cluster $gap={0}><SpinField $w={44} defaultValue="1" /><Spinner /></Cluster></SpinWrap>
    </Cluster>
    <SpinWrap $dim><Cluster $gap={0}><SpinField $w={70} defaultValue="50 %" aria-label="Gutter" /><Spinner /></Cluster></SpinWrap>
    <Cluster $gap={6}>
      <Bar />
      <Solo label="Text frame panel"><svg width="17" height="18" viewBox="0 0 17 18"><path d="M1 1h15v16H1z" fill="#222" stroke="#ddd" strokeWidth="1.500" /><path d="M3.500 4h5M6 4v5M10 4h4M10 6.500h4M3.500 11h10M3.500 14h10" stroke="#ccc" /></svg></Solo>
      <Solo label="Typography"><Glyph $size={18} $color="#ddd">fi</Glyph></Solo>
      <Bar />
    </Cluster>
    <Cluster $gap={10}>
      <Segments $h={25}>
        <Seg $w={34} aria-label="Transform origin"><svg width="18" height="18" viewBox="0 0 18 18" fill="none" stroke="#aaa"><circle cx="9" cy="9" r="6" /><path d="M9 0v18M0 9h18" /></svg></Seg>
        <Seg $w={34} aria-label="Hide selection"><Corners><ellipse cx="10" cy="10" rx="6.500" ry="4" /><circle cx="10" cy="10" r="2" fill="#aaa" /></Corners></Seg>
        <Seg $w={34} aria-label="Show alignment"><Corners><path d="M10 4v12" /><path d="M5 7v6l3-3zM15 7v6l-3-3z" fill="#aaa" /></Corners></Seg>
        <Seg $w={34} aria-label="Transform separately"><svg width="20" height="20" viewBox="0 0 20 20" fill="none" stroke="#999"><path d="M8 5V1h11v11h-4" /><path d="M2 7h11v11H2z" stroke="#fff" strokeDasharray="2 2" /><path d="M1 6h2v2H1zM12 6h2v2h-2zM1 17h2v2H1zM12 17h2v2h-2z" fill="#fff" stroke="#fff" /></svg></Seg>
      </Segments>
      <Solo label="Cycle selection box"><Corners><g transform="translate(5 4) scale(.7)"><path d="M3 12.500C0 9.500 1 4 6 4M11 4.500c3 3 2 8.500-3 8.500M6 1v6l4-3zM8 16v-6l-4 3z" stroke="#aaa" strokeWidth="2" /></g></Corners></Solo>
    </Cluster>
    <Push aria-label="More">»</Push>
  </Context>
);

/* ---------- tool strip ---------- */

const Tools = () => (
  <ToolStrip>
    <Tool $h={34} $on aria-label="Move"><svg width="14" height="20" viewBox="0 0 14 20"><path d="M2 1v14l3.500-3 2.500 6 2.500-1-2.500-6h4.500z" fill="#222" stroke="#ddd" strokeWidth="1.300" /></svg></Tool>
    <Tool $h={35} aria-label="Node"><svg width="14" height="16" viewBox="0 0 14 16"><path d="M1 0v15l4-4 8-2z" fill="#fff" /></svg></Tool>
    <ToolRule />
    <Tool $h={36} aria-label="Frame text"><Svg><path d="M1 1h20v20H1z" fill="#d0d0d0" stroke="#eee" strokeWidth="2" /><path d="M2.500 2.500h17v17h-17z" fill="none" stroke="#555" /><path d="M5 4h12v4h-1l-1-2h-2.500v11l2 1H7.500l2-1V6H7L6 8H5z" fill="#111" /></Svg></Tool>
    <Tool $h={33} aria-label="Table"><Svg s={20}><path d="M0 0h20v20H0z" fill="#bbb" /><path d="M1 1h5v2H1zM8 1h5v2H8zM15 1h4v2h-4zM1 5h5v2H1zM1 9h5v2H1zM1 13h5v2H1zM1 17h5v2H1z" fill="#555" /><path d="M8 5h5v2H8zM15 5h4v2h-4zM8 9h5v2H8zM15 9h4v2h-4zM8 13h5v2H8zM15 13h4v2h-4zM8 17h5v2H8zM15 17h4v2h-4z" fill="#000" /></Svg></Tool>
    <Tool $h={34} aria-label="Artistic text"><Glyph $size={25} $color="#ccc">A</Glyph></Tool>
    <Tool $h={32} aria-label="Pen"><Svg><path d="M1 21 4 10l8-5 5 5-4 8z" fill="#f1b24a" stroke="#a3641b" strokeWidth=".7" /><path d="M1 21l8-8" stroke="#4a2a08" /><circle cx="9.500" cy="12.500" r="1.500" fill="#4a2a08" /><path d="M12 5l3-3 5 5-3 3z" fill="#ddd" /><path d="M15 2l3-2 4 0v4l-2 3z" fill="#7c2c1a" /></Svg></Tool>
    <Tool $h={37} aria-label="Rectangle"><Svg s={18}><path d="M0 0h18v18H0z" fill="#2f8fd8" /></Svg><Flyout /></Tool>
    <Tool $h={32} aria-label="Picture frame"><svg width="22" height="18" viewBox="0 0 22 18"><path d="M1 1h20v16H1z" fill="#777" stroke="#ccc" strokeWidth="1.500" /><path d="M1 1l20 16M21 1 1 17" stroke="#1c2440" /></svg></Tool>
    <Tool $h={35} aria-label="Picture ellipse"><Svg><circle cx="11" cy="11" r="10" fill="#777" stroke="#ccc" strokeWidth="1.500" /><path d="M4 4l14 14M18 4 4 18" stroke="#1c2440" /></Svg></Tool>
    <Tool $h={34} aria-label="Place image"><svg width="22" height="18" viewBox="0 0 22 18"><path d="M1 1h20v16H1z" fill="#4aa5ea" stroke="#ddd" strokeWidth="1.500" /><path d="M2 7l3-3 3 2 3 1H2z" fill="#fff" /><circle cx="16" cy="5" r="2.500" fill="#f1b733" /><path d="M2 9c5 0 9 3 18 1v6H2z" fill="#12304e" /></svg></Tool>
    <ToolRule />
    <Tool $h={37} aria-label="Crop"><Svg s={20}><path d="M4 0v16h16M0 4h16v16M3 17 20 0" fill="none" stroke="#aaa" strokeWidth="2" /></Svg></Tool>
    <ToolRule />
    <Tool $h={36} aria-label="Colour picker wheel"><Svg s={20}>
      {["#e8442e", "#f29a2b", "#d8e02c", "#5fd04a", "#35c8b8", "#3f86ee", "#7a4bee", "#e04bc8"].map((c, i) => {
        const a = ((i * 45 - 90) * Math.PI) / 180, b = ((i * 45 - 44) * Math.PI) / 180;
        return <path key={c} d={`M10 10L${10 + 10 * Math.cos(a)} ${10 + 10 * Math.sin(a)}A10 10 0 0 1 ${10 + 10 * Math.cos(b)} ${10 + 10 * Math.sin(b)}z`} fill={c} />;
      })}
      <circle cx="10" cy="10" r="3.500" fill="#333" /><path d="M9 11 19 1" stroke="#fff" strokeWidth="1.600" /></Svg></Tool>
    <Tool $h={34} aria-label="Transparency"><svg width="12" height="22" viewBox="0 0 12 22"><path d="M1 0h10c1 7 0 11-5 12C1 11 0 7 1 0z" fill="#d3dcf0" /><path d="M6 12v8M2 21h8" stroke="#aab4cc" strokeWidth="1.600" /></svg></Tool>
    <Tool $h={32} aria-label="Picker"><Svg s={20}><path d="M0 19 3 14 10 7l4 4-8 6z" fill="#9b9b9b" /><path d="M9 6l5 5 1-2c3-1 5-3 5-6-2-3-5-2-8 2z" fill="#b8862c" /></Svg></Tool>
    <ToolRule />
    <Tool $h={36} aria-label="View"><Svg s={20}><path d="M6 19C4 15 1 13 0 10c2-1 4 1 5 2L3 4c1-1 2-1 3 1l2 5-1-9c1-1 2-1 3 0l1 8 2-8c1-1 2-1 2.500 0L14 11l3-5c1-.5 2 0 2 1-1 4-2 9-4 12z" fill="#eeb78e" stroke="#c58558" strokeWidth=".5" /></Svg></Tool>
    <Tool $h={32} aria-label="Zoom"><Svg s={20}><path d="M13 13l6 6" stroke="#d68a4a" strokeWidth="2.500" /><circle cx="8" cy="8" r="7" fill="#9fd0f3" stroke="#e4e9ee" strokeWidth="1.500" /></Svg></Tool>
  </ToolStrip>
);

/* ---------- left panel ---------- */

const styleNames = [
  "Body Text", "Body Text 1", "Body Text 2", "Body Text 3", "Body Text 4", "Body Text 5", "Body Text 6", "Body Text 7",
  "Body Text Indent 025", "Body Text Indent 050", "Body Text Indent 7", "FamilyTree", "Image_Body", "Image_Caption",
  "Image_Credit", "List_NrIndent", "No Spacing", "TOC-Body", "TOC-Body", "heading 1", "heading 14B", "heading 14B IN025", "heading 20",
];

const LeftPanel = () => (
  <Panel $w={329}>
    <Tabs>
      <Grip $gap={12} />
      <Tab>Pgs</Tab><Tab>Ast</Tab><Tab>Sto</Tab><Tab>Fnd</Tab><Tab $on>Table of Contents</Tab><Tab>Pfl</Tab>
    </Tabs>
    <PanelIcons>
      <IconButton aria-label="Insert"><svg width="20" height="19" viewBox="0 0 20 19" fill="none" stroke="#999" strokeWidth="1.500"><path d="M1 6h9v12H1z" /><path d="M6 3h9v12h-3" stroke="#bbb" strokeWidth="2.500" /><path d="M11 1h8v12h-2" /></svg></IconButton>
      <IconButton aria-label="Update"><Refresh /></IconButton>
      <IconButton aria-label="Update all"><Refresh d="#eee" /></IconButton>
      <IconButton aria-label="Remove"><Trash /></IconButton>
      <IconButton aria-label="Rename"><svg width="22" height="14" viewBox="0 0 22 14" fill="none"><path d="M9 3v8" stroke="#888" /><path d="M11 1h2.500l1 1 1-1H18M11 13h2.500l1-1 1 1H18M14.500 2v10" stroke="#fff" strokeWidth="1.300" /></svg></IconButton>
    </PanelIcons>
    <Form>
      <Field><FieldLabel htmlFor="toc">TOC:</FieldLabel><Select w={210} h={26} value="TOC 2" id="toc" /></Field>
      <Field $mt={9}><FieldLabel as="span">Scope:</FieldLabel><Toggle><ToggleButton $on>Document</ToggleButton><ToggleButton>Section</ToggleButton></Toggle></Field>
      <Field $mt={11}><FieldLabel as="span">Look In:</FieldLabel><Toggle><ToggleButton $on>All Text Frames</ToggleButton><ToggleButton>Text Flow</ToggleButton></Toggle></Field>
      <Checks $mt={7}>
        <CheckLine><Check type="checkbox" $s={15} />Stop at next TOC</CheckLine>
        <CheckLine><Check type="checkbox" $s={15} />Include entries before TOC</CheckLine>
      </Checks>
      <Rule />
      <Field><FieldLabel htmlFor="tocstyle">TOC Style:</FieldLabel><Select w={210} h={26} value="TOC-Body 1" id="tocstyle" /><IconButton aria-label="TOC style menu"><MenuIcon /></IconButton></Field>
      <Checks $mt={7}>
        <CheckLine><Check type="checkbox" $s={15} />Numbers before headings</CheckLine>
        <CheckLine><Check type="checkbox" $s={15} defaultChecked />Remove line breaks</CheckLine>
        <CheckLine><Check type="checkbox" $s={15} defaultChecked />Include inline pins</CheckLine>
      </Checks>
      <Field $mt={4}><FieldLabel as="span">Separator:</FieldLabel><SeparatorBox><Caret w={9} /><Chip>»</Chip></SeparatorBox></Field>
    </Form>
    <StyleTable>
      <thead><tr><th aria-label="Included" /><th>Style Name</th><th>#s</th></tr></thead>
      <tbody>
        {styleNames.map((n, i) => (
          <tr key={i}>
            <td><Check type="checkbox" $s={14} defaultChecked={i > 19} aria-label={`Include ${n}`} /></td>
            <td>{n}</td>
            <td><Check type="checkbox" $s={14} aria-label={`Number ${n}`} /></td>
          </tr>
        ))}
      </tbody>
    </StyleTable>
    <TableFill />
  </Panel>
);

/* ---------- document ---------- */

const leftToc = [
  "TABLE OF CONTENTS", "TABLE OF ILLUSTRATIONS", "TABLE OF ILLUSTRATIONS", "TABLE OF ILLUSTRATIONS", "TABLE OF ILLUSTRATIONS",
  "Map of Southern Poland (Galicia) Where Irauth Families Lived", "INTRODUCTION", "Erauth (Irauth) Family History",
  "Finding Polish Relatives", "Internet Research", "Research Facts:", "Assumptions Based on Known Facts / Documentation:",
  "Irauth/ Erauth Family Tree - 1850s - 2020 (Part 1 of 2)", "Irauth/ Erauth Family Tree - 1850s - 2020 (Part 2 of 2)",
  "Family Tree of Jacek (1973) Irauth", "Irauth Family Tree - Franciszek (ca. 1848) Irauth Branch",
  "CHAPTER O1 - IRAUTHS LIVING IN POLAND IN 2020", " Franciszek Irauth (ca. 1848 - ????) and Descendants",
  " Michal Irauth 1885-1930 and Family", "Irauth Family Tree - Stanisłaus (ca. 1885) Irauth Branch",
  "Stanisłaus Irauth (1885 - ????) and Descendants", "Jadwiga (Janka) (ca. 1908) Irauth Kotowicz", "Franciszek (1910) Karol Irauth",
  "Stanisłaus (1943) Irauth", "Andrzej Irauth (1945 -)", "Janina (1913) Irauth Łaciak", "CHAPTER O2 - THE AMERICAN IRAUTHS / ERAUTHS 1906-2020",
  "Irauth Family Tree - Teofil Irauth (1876-1942) Branch", "Teofil Irauth (1876 - 1942) and Descendants",
];
const rightToc = [
  "Józefa Michoń Erauth (1872-1956)", "Michoń Family Photos From Poland", "Leo J. Erauth (1903 - 1981)",
  "Charles “Pete” (Zdisław) Irauth (1905 - 1988)", "Mitchell Erauth (1932 - 2013)", "Rita Erauth Gibson (1939 - ????)",
  "Frank Walter Erauth (1907 - 1988)", "Stella Sobus Erauth (1913 - 1963)", "Josephine Angeline Erauth Foertschbeck (1937 -)",
  "Theophil “Phil” Erauth (1938-)", "Frank Stephen Erauth (1940 - )", "Franklin Erauth (1963)", "Robert Erauth (1941 - 1948)",
  "Tadeuz “Ted” Erauth (1909 - 1970)", "Joyce Ann Erauth (ca. 1940  - )", "Stanley (Stanislaus) Erauth (1912 - 1920)",
  "Mitchell (Mierczysław) Erauth (1915 - 1979)", "BIBLIOGRAPHY / INTERNET REFERENCES - URLs",
];

const TocList = ({ items, y, alt }: { items: string[]; y: number; alt?: boolean }) => (
  <List $y={y} $alt={alt}>{items.map((t, i) => <li key={i}>{t}<Mark>¶</Mark></li>)}</List>
);
/* tab-stop arrows, given as points on the sheet */
const TabMarks = ({ pts, edge = [] }: { pts: [number, number][]; edge?: number[] }) => (
  <Overlay width="1" height="1">
    {pts.map(([x, y], i) => <path key={i} d={`M${x} ${y - 1.500}l1.500 1.500-1.500 1.500M${x + 1.500} ${y - 1.500}l1.500 1.500-1.500 1.500`} fill="none" stroke="#5a9cf0" strokeWidth="1" />)}
    {edge.map((y) => <path key={y} d={`M50 ${y - 3}h-2a1.500 1.500 0 0 0 0 3h1v3h1z`} fill="#3f88ea" />)}
  </Overlay>
);
const contributorMarks = [374, 385, 396, 407].flatMap((y, r) =>
  (r ? [65, 98, 132, 200, 233] : [111, 132, 196, 220, 233]).map((x) => [x, y + 1] as [number, number]));
const printerMarks = [455, 467, 479].flatMap((y, r) =>
  (r ? [65, 98, 132] : [107, 132]).map((x) => [x, y + 1] as [number, number]));
const footMarks: [number, number][] = [138, 268, 301, 333, 367].map((x) => [x, 523]);
const footMarksRight: [number, number][] = [65, 98, 132, 166, 199, 233, 266, 300, 336, 367, 400, 506].map((x) => [x, 523]);

const Handle = ({ x, y }: { x: number; y: number }) => (
  <g><circle cx={x} cy={y} r="7.500" fill="#f3f3f3" stroke="#cfcfcf" strokeWidth=".8" /><circle cx={x} cy={y} r="5" fill="#1c68c4" /></g>
);

const Pages = () => (
  <Spreads>
    <Spread>
      <Sheet>
        <Frame $y={66} $h={453} /><Frame $y={517} $h={21} />
        <Columns $y={367} $lh={11}>
          <span>Contributors:</span><span>Jacek Irauth</span><span>Puławy, Poland<Mark>¶</Mark></span>
          <span /><span>Angelika Irauth</span><span>Warsaw, Poland<Mark>¶</Mark></span>
          <span /><span>Andrzej Irauth ,</span><span>Bielsko-Biała, Poland<Mark>¶</Mark></span>
          <span /><span>Tatiana Irauth</span><span>Bielsko-Biała, Poland<Mark>¶</Mark></span>
        </Columns>
        <Columns $y={449} $lh={12}>
          <span>Printed by:</span><span>Checkmate Graphics <Squiggle>Pre</Squiggle>-Press, Inc.<Mark>¶</Mark></span><span />
          <span /><span>10176 Baltimore National Pike<Mark>¶</Mark></span><span />
          <span /><span><Squiggle>Ellicott</Squiggle> City, MD 21042<Mark>¶</Mark></span><span />
        </Columns>
        <Overlay width="1" height="1"><path d="M184 328l2 2 2-2 2 2 2-2 2 2 2-2 2 2 2-2 2 2 2-2 2 2 2-2 2 2 2-2" fill="none" stroke="#f00" strokeWidth="1.500" /></Overlay>
        <TabMarks pts={[...contributorMarks, ...printerMarks, ...footMarks]} edge={[364, 419, 432, 444, 497]} />
        <Footer $y={517}>John H. Foertschbeck, Sr.</Footer>
        <Footer $y={517} $x={150}>© Jun 5, 2020</Footer>
        <Footer $y={517} $x={210}>May 15, 2020</Footer>
        <Footer $y={517} $x={384} $size={10} $plain>iv<Mark>¶</Mark></Footer>
      </Sheet>
      <Sheet>
        <Frame $y={66} $h={449} $w={317} /><Frame $y={66} $h={449} $x={371} $w={316} />
        <Frame $y={517} $h={22} />
        <Footer $y={321} $size={10} $plain>others and available documentation.<Mark>¶</Mark></Footer>
        <Footer $y={340} $size={10} $plain>“I” and “We” refer to the author, John H. Foertschbeck, Sr., typically used when making assumptions or “best guesses”.<Mark>¶</Mark></Footer>
        <TabMarks pts={footMarksRight} />
        <Footer $y={517} $x={318} $size={10} $plain>v</Footer>
        <Footer $y={517} $x={416}>John H. Foertschbeck, Sr.</Footer>
        <Footer $y={517} $x={517}>© Jun 5, 2020</Footer>
        <Footer $y={517} $x={580}>May 15, 2020<Mark>¶</Mark></Footer>
      </Sheet>
    </Spread>
    <Spread>
      <Sheet>
        <Frame $y={66} $h={28} $c="#3c70dc" /><Frame $y={93} $h={427} /><Frame $y={517} $h={22} />
        <Heading $y={65}>TABLE OF CONTENTS<Mark>§</Mark></Heading>
        <TocList items={leftToc} y={105} />
        <Footer $y={515} $x={154} $size={7}>John H. Foertschbeck, Sr. · © Jun 5, 2020 · May 15, 2020</Footer>
        <Footer $y={515} $x={384} $size={7} $plain>vi</Footer>
        <TabMarks pts={[[304, 522], [333, 522], [367, 522]]} edge={[100]} />
      </Sheet>
      <Sheet>
        <Frame $y={66} $h={28} /><Frame $y={94} $h={426} $c="#7d80ee" /><Frame $y={518} $h={22} />
        <Heading $y={63}>TABLE OF CONTENTS<Mark>§</Mark></Heading>
        <TocList items={rightToc} y={91} alt />
        <Footer $y={516} $size={10} $plain>TABLE OF CONTENTS<Mark>§</Mark></Footer>
      </Sheet>
      <Overlay width="1" height="1" $inset={8}>
        <g fill="none" stroke={BLUE}>
          <path d="M787.500 95.500h637v395h-637z" strokeWidth="2" />
          <path d="M1105.500 63v31" stroke="#5594ea" />
          <path d="M687 433.500 787.500 174" strokeWidth="1.300" />
        </g>
        <path d="M738 297v13l-8-3z" fill={BLUE} />
        <path d="M784 168v12l8-6z" fill={BLUE} />
        <path d="M1420.500 406v12l9-6z" fill="#fff" stroke={BLUE} strokeWidth="1.500" />
        <circle cx="1105.500" cy="57.500" r="5.500" fill="#fff" stroke={BLUE} strokeWidth="2" />
        {[[787.500, 95.500], [1105.500, 95.500], [1424.500, 95.500], [787.500, 292.500], [1424.500, 292.500], [787.500, 490.500], [1105.500, 490.500], [1424.500, 490.500], [1437.500, 503.500]].map(([x, y], i) => <Handle key={i} x={x} y={y} />)}
      </Overlay>
    </Spread>
    <Spread>
      <Sheet><Frame $y={66} $h={453} /><Heading $y={64}>TABLE OF ILLUSTRATIONS<Mark>§</Mark></Heading></Sheet>
      <Sheet><Frame $y={66} $h={453} /><Heading $y={64}>TABLE OF ILLUSTRATIONS<Mark>§</Mark></Heading></Sheet>
    </Spread>
  </Spreads>
);

const STEP = 67.04;
const Ticks = ({ from, to, origin, vertical }: { from: number; to: number; origin: number; vertical?: boolean }) => {
  const out: React.ReactNode[] = [];
  for (let i = from * 8; i <= to * 8; i++) {
    const p = origin + (i * STEP) / 8;
    const len = i % 8 === 0 ? 9 : i % 4 === 0 ? 5 : 3;
    out.push(<path key={i} d={vertical ? `M25 ${p}h${-len}` : `M${p} 25v${-len}`} stroke="#ccc" strokeWidth="1.200" />);
    if (i % 8 === 0) {
      out.push(
        <text key={`t${i}`} x={vertical ? 0 : p} y={vertical ? 0 : 12} transform={vertical ? `translate(12 ${p - 1}) rotate(-90)` : undefined} textAnchor="middle" fontFamily="Open Sans, sans-serif" fontSize={vertical ? 11 : 12} fill="#c4c4c4">{i / 8}</text>
      );
    }
  }
  return <>{out}</>;
};

const DocumentView = () => (
  <Doc>
    <DocTab><span>00-IrauthOrigins [Modified] (73.1%)</span><IconButton aria-label="Close document"><svg width="9" height="9" viewBox="0 0 9 9"><path d="M0 0l9 9M9 0 0 9" stroke="#eee" strokeWidth="1.600" /></svg></IconButton></DocTab>
    <DocBody>
      <Canvas>
        <Pages />
        <RulerX>
          <svg width="1600" height="25"><Ticks from={0} to={23} origin={24.500} /><path d="M1065 2v18" stroke="#ccc" /><path d="M7.700 25v-3M16.100 25v-3" stroke="#ccc" /></svg>
        </RulerX>
        <RulerY>
          <svg width="25" height="1060"><Ticks from={-4} to={11} origin={320.300} vertical /><path d="M0 675h25" stroke="#ddd" /><path d="M0 0h25v25H0z" fill="#404040" /><text x="7" y="17" fontFamily="Open Sans, sans-serif" fontSize="12" fill="#bbb">in</text></svg>
        </RulerY>
      </Canvas>
      <Scroll><svg width="10" height="9" viewBox="0 0 10 9"><path d="M5 0l5 9H0z" fill="#8a8a8a" /></svg><Thumb /></Scroll>
    </DocBody>
  </Doc>
);

/* ---------- right panel ---------- */

const textStyles: { name: string; para: boolean; on?: boolean }[] = [
  { name: "[No Style]", para: true }, { name: "TOC-Body 1: Entry", para: true }, { name: "TOC-Body 1: heading 14B", para: true, on: true },
  { name: "TOC-Body 1: heading 14B IN025", para: true }, { name: "TOC-Body 1: heading 20", para: true }, { name: "[No Style]", para: false, on: true },
  { name: "TOC-Body 1: heading 14B IN025...", para: false }, { name: "TOC-Body 1: heading 14B Number", para: false },
  { name: "TOC-Body 1: heading 20 Number", para: false }, { name: "TOC-Body 1: Number", para: false },
];
const AddStyle = ({ ch, italic }: { ch: string; italic?: boolean }) => (
  <svg width="16" height="18" viewBox="0 0 16 18">
    <path d="M0 5h6M3 2v6" stroke="#888" />
    <text x="5" y="17" fontFamily="Liberation Serif, serif" fontSize={ch === "¶" ? 16 : 22} fontStyle={italic ? "italic" : "normal"} fill="#888">{ch}</text>
  </svg>
);

const RightPanel = () => (
  <Panel $w={338}>
    <Tabs>
      <Grip $gap={11} />
      <Tab $tight>Layers</Tab><Tab $tight>Character</Tab><Tab $tight>Paragraph</Tab><Tab $tight $on>Text Styles</Tab>
      <TabEnd><MenuIcon /></TabEnd>
    </Tabs>
    <Summary>
      <svg width="8" height="16" viewBox="0 0 8 16"><path d="M8 8v8H0z" fill="#777" /></svg>
      <SummaryText>TOC-Body 1: heading 14B + Font: Calibri;<br />Hyperlink</SummaryText>
      <Ringed ch="T" c="#ccc" />
    </Summary>
    <StyleList>
      {textStyles.map((s, i) => (
        <StyleRow key={i} $on={s.on}>
          <RowGlyph>{s.para ? "¶" : <u>a</u>}</RowGlyph><span>{s.name}</span><IconButton aria-label="Style menu"><MenuIcon /></IconButton>
        </StyleRow>
      ))}
    </StyleList>
    <StyleActions>
      <ActionSet $ml={0} $gap={9}>
        <IconButton aria-label="Add paragraph style"><AddStyle ch="¶" /></IconButton>
        <IconButton aria-label="Add character style"><AddStyle ch="a" /></IconButton>
        <IconButton aria-label="Add group style"><AddStyle ch="s" italic /></IconButton>
      </ActionSet>
      <ActionSet $ml={70} $gap={6}>
        <IconButton aria-label="Show paragraph styles"><Ringed ch="¶" c="#fff" /></IconButton>
        <IconButton aria-label="Show character styles"><Ringed ch="a" c="#999" /></IconButton>
      </ActionSet>
      <Spacer $grow={1} />
      <IconButton aria-label="Delete style"><Trash /></IconButton>
    </StyleActions>
    <Tabs>
      <Grip $gap={11} />
      <Tab $tight $on>Transform</Tab><Tab $tight>History</Tab><Tab $tight>Navigator</Tab>
    </Tabs>
    <PanelTail />
  </Panel>
);

export default function App() {
  return (
    <Shell>
      <Global />
      <TitleStrip />
      <Top />
      <ContextBar />
      <Main>
        <Tools />
        <LeftPanel />
        <Gutter />
        <DocumentView />
        <Gutter />
        <RightPanel />
      </Main>
    </Shell>
  );
}
